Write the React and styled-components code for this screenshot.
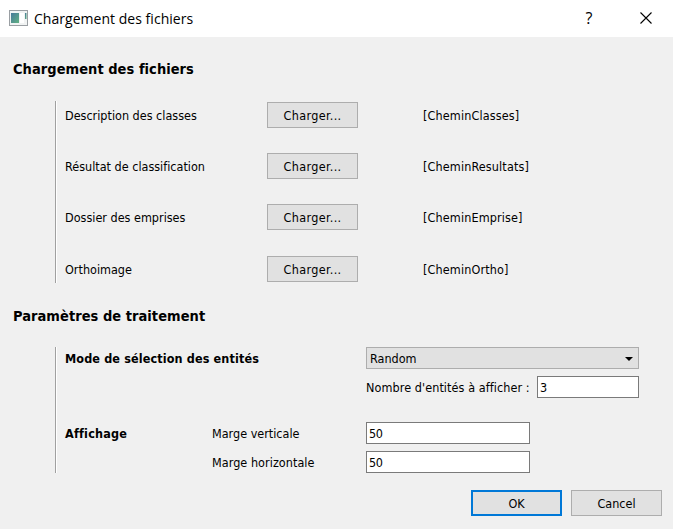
import React from "react";
import styled, { createGlobalStyle } from "styled-components";

const GlobalStyle = createGlobalStyle`
  * { box-sizing: border-box; }
  body { margin: 0; background: #f0f0f0; }
`;

const Dialog = styled.div`
  width: 673px;
  height: 529px;
  display: flex;
  flex-direction: column;
  background: #f0f0f0;
  color: #000;
  font: 12.5px/16px "DejaVu Sans Condensed", "DejaVu Sans", sans-serif;
  font-stretch: condensed;
  font-variant-ligatures: none;
  white-space: nowrap;
  overflow: hidden;
`;

const TitleBar = styled.header`
  height: 37px;
  flex: none;
  display: flex;
  align-items: center;
  padding: 0 2px 1px 9px;
  background: #fff;
`;

const Title = styled.span`
  flex: 1;
  margin-left: 6px;
  padding-top: 1px;
  font: 14px/20px "Open Sans", sans-serif;
  letter-spacing: 0.03px;
`;

const CaptionButton = styled.button`
  display: flex;
  align-items: center;
  justify-content: center;
  width: ${(p) => p.$width}px;
  height: 36px;
  padding: 0;
  border: 0;
  background: none;
  color: #000;
  font: 16px/20px "Open Sans", sans-serif;
`;

const Heading = styled.h2`
  margin: ${(p) => p.$top}px 0 0 13px;
  height: 20px;
  font-size: 14.5px;
  line-height: 20px;
  font-weight: bold;
  letter-spacing: 0.04px;
`;

const Text = styled.span`
  justify-self: start;
  padding-top: ${(p) => p.$drop || 0}px;
  letter-spacing: ${(p) => p.$track || 0}px;
  font-weight: ${(p) => (p.$bold ? "bold" : "normal")};
`;

const Group = styled.section`
  margin: ${(p) => p.$top}px 34px 0 55px;
  height: ${(p) => p.$height}px;
  flex: none;
  border-left: 1px solid #a0a0a0;
  box-shadow: inset 1px 0 #fff;
  padding-left: 9px;
`;

const FileGrid = styled(Group)`
  display: grid;
  grid-template-columns: 202px 156px 1fr;
  grid-template-rows: 51px 51px 52px 26px;
  align-items: start;
  padding-top: 1px;
`;

const Cell = styled.div`
  display: flex;
  align-items: center;
  height: 26px;
  padding-top: 1px;
`;

const PushButton = styled.button`
  width: 91px;
  height: 26px;
  padding: 1px 0 0;
  border: ${(p) => (p.$default ? "2px solid #0078d7" : "1px solid #adadad")};
  background: #e1e1e1;
  color: #000;
  font: inherit;
  line-height: 16px;
  letter-spacing: ${(p) => p.$track || 0}px;
`;

const Settings = styled(Group)`
  display: flex;
  flex-direction: column;
  gap: 7px;
`;

const SettingRow = styled.div`
  display: grid;
  grid-template-columns: ${(p) => p.$columns};
  align-items: center;
  height: 22px;
  margin-top: ${(p) => p.$top || 0}px;
`;

const Select = styled.div`
  display: flex;
  align-items: center;
  justify-content: space-between;
  height: 22px;
  padding: 1px 5px 0 3px;
  border: 1px solid #adadad;
  background: #e1e1e1;
`;

const Field = styled.input`
  width: ${(p) => p.$width}px;
  height: 22px;
  padding: 1px 2px 0;
  border: 1px solid #7a7a7a;
  border-radius: 0;
  background: #fff;
  color: #000;
  font: inherit;
  letter-spacing: -0.4px;
  outline: none;
`;

const Footer = styled.footer`
  display: flex;
  justify-content: flex-end;
  gap: 9px;
  margin: 17px 11px 0 0;
`;

const AppIcon = () => (
  <svg width="19" height="16" viewBox="0 0 19 16">
    <defs>
      <linearGradient id="pane" x1="0" y1="0" x2="1" y2="1">
        <stop offset="0" stopColor="#47799a" />
        <stop offset="1" stopColor="#61b183" />
      </linearGradient>
    </defs>
    <rect x="0.5" y="0.5" width="18" height="15" fill="#f1f3f3" stroke="#9a9fa3" />
    <rect x="2" y="3" width="8" height="10" fill="url(#pane)" />
    <rect x="11" y="3" width="4" height="10" fill="#fff" />
    <rect x="16" y="3" width="1.5" height="6" fill="url(#pane)" />
  </svg>
);

const CloseIcon = () => (
  <svg width="12" height="12" viewBox="0 0 12 12">
    <path d="M0.5 0.5L11.5 11.5M11.5 0.5L0.5 11.5" stroke="#000" strokeWidth="1.1" />
  </svg>
);

const Arrow = () => (
  <svg width="8" height="4" viewBox="0 0 8 4">
    <path d="M0 0H8L4 4Z" fill="#000" />
  </svg>
);

const files = [
  { label: "Description des classes", path: "[CheminClasses]" },
  { label: "Résultat de classification", path: "[CheminResultats]" },
  { label: "Dossier des emprises", path: "[CheminEmprise]" },
  { label: "Orthoimage", path: "[CheminOrtho]" },
];

export default function App() {
  return (
    <Dialog>
      <GlobalStyle />
      <TitleBar>
        <AppIcon />
        <Title>Chargement des fichiers</Title>
        <CaptionButton $width={64}>?</CaptionButton>
        <CaptionButton $width={50}><CloseIcon /></CaptionButton>
      </TitleBar>

      <Heading $top={22}>Chargement des fichiers</Heading>
      <FileGrid $top={22} $height={182}>
        {files.map((f) => (
          <React.Fragment key={f.label}>
            <Cell><Text>{f.label}</Text></Cell>
            <PushButton $track={0.35}>Charger...</PushButton>
            <Cell><Text $track={0.13}>{f.path}</Text></Cell>
          </React.Fragment>
        ))}
      </FileGrid>

      <Heading $top={23}>Paramètres de traitement</Heading>
      <Settings $top={21} $height={126}>
        <SettingRow $columns="301px 273px">
          <Text $bold $drop={1} $track={0.13}>Mode de sélection des entités</Text>
          <Select>Random<Arrow /></Select>
        </SettingRow>
        <SettingRow $columns="301px 171px 102px">
          <span />
          <Text $drop={1} $track={0.08}>Nombre d'entités à afficher :</Text>
          <Field $width={102} defaultValue="3" />
        </SettingRow>
        <SettingRow $columns="147px 154px 164px" $top={17}>
          <Text $bold $drop={2} $track={0.2}>Affichage</Text>
          <Text $drop={2}>Marge verticale</Text>
          <Field $width={164} defaultValue="50" />
        </SettingRow>
        <SettingRow $columns="147px 154px 164px">
          <span />
          <Text $drop={2} $track={0.05}>Marge horizontale</Text>
          <Field $width={164} defaultValue="50" />
        </SettingRow>
      </Settings>

      <Footer>
        <PushButton $default>OK</PushButton>
        <PushButton>Cancel</PushButton>
      </Footer>
    </Dialog>
  );
}
